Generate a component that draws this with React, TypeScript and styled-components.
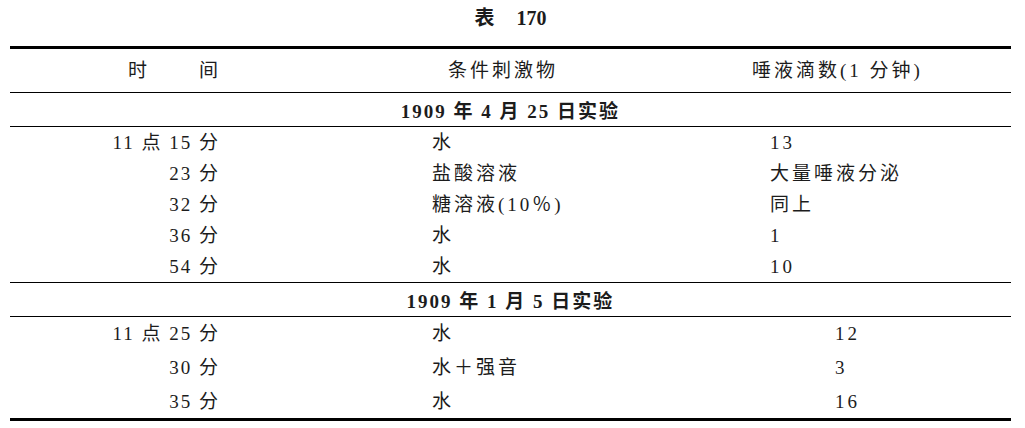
import React from "react";
import styled, { createGlobalStyle } from "styled-components";

const GlobalStyle = createGlobalStyle`
  html, body {
    margin: 0;
    padding: 0;
    background: #ffffff;
  }
  body {
    font-family: "Liberation Serif", "Noto Sans CJK SC", serif;
    color: #1c1c1c;
  }
`;

const Page = styled.div`
  width: 1025px;
  height: 428px;
  padding: 0 14px 0 10px;
  box-sizing: border-box;
`;

const Title = styled.div`
  height: 46px;
  display: flex;
  align-items: flex-start;
  justify-content: center;
  gap: 22px;
  padding-top: 6px;
  box-sizing: border-box;
  font-size: 20px;
  font-weight: 700;
  line-height: 24px;
`;

const Table = styled.div`
  border-top: 3px solid #000;
  border-bottom: 3px solid #000;
  display: flex;
  flex-direction: column;
`;

const Row = styled.div<{ $height: number; $rule?: boolean }>`
  display: grid;
  grid-template-columns: 207px 553px 1fr;
  align-items: center;
  height: ${(p) => p.$height}px;
  border-bottom: ${(p) => (p.$rule ? "1px solid #000" : "none")};
  font-size: 19px;
  letter-spacing: 3px;
  line-height: 22px;
`;

const TimeCell = styled.div`
  display: flex;
  justify-content: flex-end;
  gap: 50px;
  margin-right: -3px;
  letter-spacing: 2px;
`;

const StimCell = styled.div<{ $indent: number }>`
  padding-left: ${(p) => p.$indent}px;
`;

const SalivaCell = styled.div<{ $indent: number }>`
  margin-left: ${(p) => p.$indent}px;
  white-space: nowrap;
`;

const Section = styled.div`
  height: 33px;
  display: flex;
  align-items: center;
  justify-content: center;
  border-bottom: 1px solid #000;
  font-size: 19px;
  font-weight: 700;
  letter-spacing: 2px;
`;

type Entry = { time: string; stim: string; saliva: string; h: number };

const first: Entry[] = [
  { time: "11 点 15 分", stim: "水", saliva: "13", h: 31 },
  { time: "23 分", stim: "盐酸溶液", saliva: "大量唾液分泌", h: 31 },
  { time: "32 分", stim: "糖溶液(10％)", saliva: "同上", h: 31 },
  { time: "36 分", stim: "水", saliva: "1", h: 31 },
  { time: "54 分", stim: "水", saliva: "10", h: 31 },
];

const second: Entry[] = [
  { time: "11 点 25 分", stim: "水", saliva: "12", h: 34 },
  { time: "30 分", stim: "水＋强音", saliva: "3", h: 34 },
  { time: "35 分", stim: "水", saliva: "16", h: 33 },
];

export default function App() {
  return (
    <Page>
      <GlobalStyle />
      <Title>
        <span>表</span>
        <span>170</span>
      </Title>
      <Table>
        <Row $height={43} $rule>
          <TimeCell>
            <span>时</span>
            <span>间</span>
          </TimeCell>
          <StimCell $indent={231}>条件刺激物</StimCell>
          <SalivaCell $indent={-18}>唾液滴数(1 分钟)</SalivaCell>
        </Row>
        <Section>1909 年 4 月 25 日实验</Section>
        {first.map((e, i) => (
          <Row key={e.time} $height={e.h} $rule={i === first.length - 1}>
            <TimeCell>{e.time}</TimeCell>
            <StimCell $indent={215}>{e.stim}</StimCell>
            <SalivaCell $indent={0}>{e.saliva}</SalivaCell>
          </Row>
        ))}
        <Section>1909 年 1 月 5 日实验</Section>
        {second.map((e) => (
          <Row key={e.time} $height={e.h}>
            <TimeCell>{e.time}</TimeCell>
            <StimCell $indent={215}>{e.stim}</StimCell>
            <SalivaCell $indent={65}>{e.saliva}</SalivaCell>
          </Row>
        ))}
      </Table>
    </Page>
  );
}
